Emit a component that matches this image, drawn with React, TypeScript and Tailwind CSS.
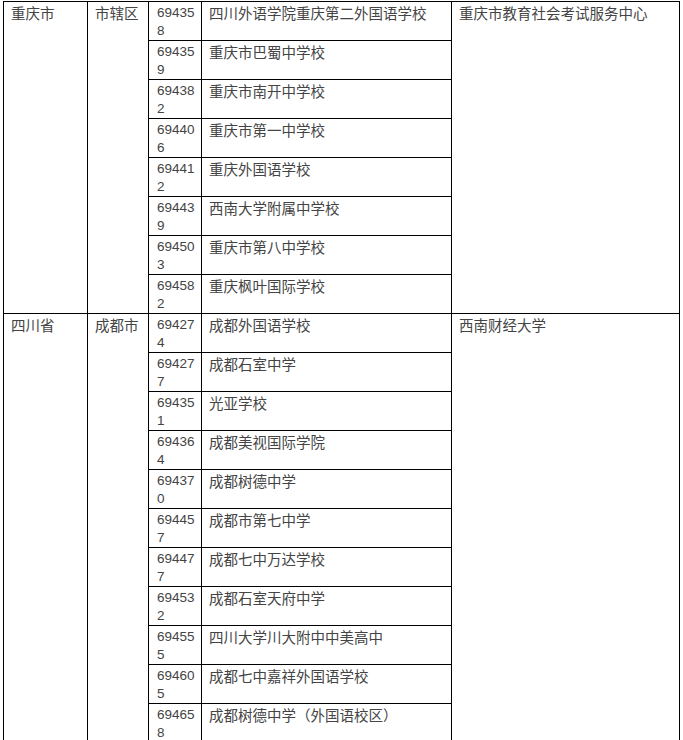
const cq = [
  ["694358", "四川外语学院重庆第二外国语学校"],
  ["694359", "重庆市巴蜀中学校"],
  ["694382", "重庆市南开中学校"],
  ["694406", "重庆市第一中学校"],
  ["694412", "重庆外国语学校"],
  ["694439", "西南大学附属中学校"],
  ["694503", "重庆市第八中学校"],
  ["694582", "重庆枫叶国际学校"],
];

const sc = [
  ["694274", "成都外国语学校"],
  ["694277", "成都石室中学"],
  ["694351", "光亚学校"],
  ["694364", "成都美视国际学院"],
  ["694370", "成都树德中学"],
  ["694457", "成都市第七中学"],
  ["694477", "成都七中万达学校"],
  ["694532", "成都石室天府中学"],
  ["694555", "四川大学川大附中中美高中"],
  ["694605", "成都七中嘉祥外国语学校"],
  ["694658", "成都树德中学（外国语校区）"],
];

const cjk = "font-['Noto_Sans_CJK_SC',sans-serif] text-[14.5px] leading-[18px]";
const cell = "border-r border-b border-black pl-[7px] pr-[6px] pt-[2px] text-[#444]";

// auto-placement: province, city, first row, org, then the remaining rows
const Group = ({
  province,
  city,
  org,
  rows,
  span,
}: {
  province: string;
  city: string;
  org: string;
  rows: string[][];
  span: string;
}) => (
  <>
    <div className={`${cell} ${cjk} col-start-1 ${span}`}>{province}</div>
    <div className={`${cell} ${cjk} col-start-2 ${span}`}>{city}</div>
    {rows.map(([code, name], i) => (
      <div key={code} className="contents">
        <div
          className={`${cell} col-start-3 break-all pl-[8px] font-['Liberation_Sans',sans-serif] text-[13.5px] leading-[18px]`}
        >
          {code}
        </div>
        <div className={`${cell} ${cjk} col-start-4`}>{name}</div>
        {i === 0 && <div className={`${cell} ${cjk} col-start-5 ${span}`}>{org}</div>}
      </div>
    ))}
  </>
);

export default function App() {
  return (
    <div className="w-[683px] h-[740px] overflow-hidden bg-white">
      <div className="ml-[3px] mt-[1px] w-[677px] border-l border-t border-black grid grid-cols-[84px_61px_53px_250px_228px] auto-rows-[39px]">
        <Group province="重庆市" city="市辖区" org="重庆市教育社会考试服务中心" rows={cq} span="row-span-8" />
        <Group province="四川省" city="成都市" org="西南财经大学" rows={sc} span="row-span-11" />
      </div>
    </div>
  );
}
